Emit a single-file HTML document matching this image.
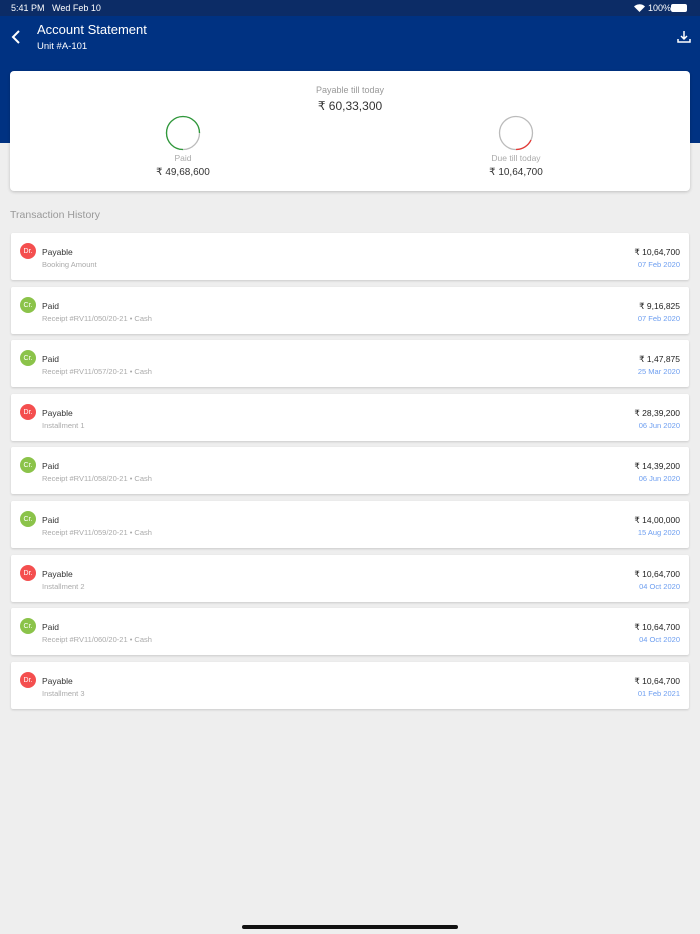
<!DOCTYPE html>
<html><head><meta charset="utf-8"><style>
*{margin:0;padding:0;box-sizing:border-box}
body{width:700px;height:934px;background:#eeeeee;font-family:"Liberation Sans",sans-serif;position:relative;overflow:hidden}
.sb{position:absolute;top:0;left:0;width:700px;height:16px;background:#0c2c66;color:#fff;font-size:9px}
.hd{position:absolute;top:16px;left:0;width:700px;height:127px;background:#003282}
.card{position:absolute;left:10px;top:71px;width:680px;height:120px;background:#fff;border-radius:4px;box-shadow:0 1px 3px rgba(0,0,0,.2)}
.t{position:absolute;white-space:nowrap}
.row{position:absolute;left:11px;width:678px;height:47px;background:#fff;border-radius:2px;box-shadow:0 1px 2px rgba(0,0,0,.15)}
.b{position:absolute;left:9px;top:10px;width:16px;height:16px;border-radius:50%;color:#fff;font-size:7px;display:flex;align-items:center;justify-content:center}
.dr{background:#f44f4f}.cr{background:#8bc34a}
.r1{position:absolute;left:31px;top:14px;font-size:8.5px;color:#333}
.r2{position:absolute;left:31px;top:27px;font-size:7.5px;color:#aaa}
.a{position:absolute;right:9px;top:14px;font-size:8.5px;color:#222}
.d{position:absolute;right:9px;top:27px;font-size:7.5px;color:#6d9ef0}
</style></head><body>
<div class="sb"><span class="t" style="left:11px;top:3px">5:41 PM&nbsp;&nbsp; Wed Feb 10</span><span class="t" style="left:648px;top:3px">100%</span>
<svg style="position:absolute;left:634px;top:4px" width="11" height="8" viewBox="0 0 11 8"><path d="M5.5 8L0 2.5A8 8 0 0 1 11 2.5Z" fill="#fff"/></svg>
<div style="position:absolute;left:671px;top:4px;width:16px;height:8px;background:#fff;border-radius:2px"></div></div>
<div class="hd">
<svg style="position:absolute;left:10px;top:13px" width="12" height="16"><path d="M9 2L3 8L9 14" stroke="#fff" stroke-width="2" fill="none"/></svg>
<div class="t" style="left:37px;top:6px;color:#fff;font-size:13px">Account Statement</div>
<div class="t" style="left:37px;top:25px;color:#fff;font-size:9.5px">Unit #A-101</div>
<svg style="position:absolute;left:677px;top:14px" width="14" height="14"><path d="M7 1V9M4 6L7 9L10 6M1 9V12H13V9" stroke="#fff" stroke-width="1.5" fill="none"/></svg>
</div>
<div class="card">
<div class="t" style="left:0;width:680px;text-align:center;top:14px;font-size:9px;color:#999">Payable till today</div>
<div class="t" style="left:0;width:680px;text-align:center;top:28px;font-size:12px;color:#333">₹ 60,33,300</div>
<svg style="position:absolute;left:155px;top:44px" width="36" height="36"><circle cx="18" cy="18" r="16.5" stroke="#bbb" stroke-width="1.3" fill="none"/><path d="M18 34.5A16.5 16.5 0 0 1 1.5 18A16.5 16.5 0 0 1 34.5 18" stroke="#2e9a3a" stroke-width="1.3" fill="none"/></svg>
<svg style="position:absolute;left:488px;top:44px" width="36" height="36"><circle cx="18" cy="18" r="16.5" stroke="#bbb" stroke-width="1.3" fill="none"/><path d="M33 25A16.5 16.5 0 0 1 18 34.5" stroke="#e53935" stroke-width="1.3" fill="none"/></svg>
<div class="t" style="left:123px;width:100px;text-align:center;top:82px;font-size:8.5px;color:#aaa">Paid</div>
<div class="t" style="left:123px;width:100px;text-align:center;top:96px;font-size:10px;color:#333">₹ 49,68,600</div>
<div class="t" style="left:456px;width:100px;text-align:center;top:82px;font-size:8.5px;color:#aaa">Due till today</div>
<div class="t" style="left:456px;width:100px;text-align:center;top:96px;font-size:10px;color:#333">₹ 10,64,700</div>
</div>
<div class="t" style="left:10px;top:209px;font-size:10.5px;color:#999">Transaction History</div>
<div class="row" style="top:233px"><div class="b dr">Dr.</div><div class="r1">Payable</div><div class="r2">Booking Amount</div><div class="a">₹ 10,64,700</div><div class="d">07 Feb 2020</div></div>
<div class="row" style="top:287px"><div class="b cr">Cr.</div><div class="r1">Paid</div><div class="r2">Receipt #RV11/050/20-21 • Cash</div><div class="a">₹ 9,16,825</div><div class="d">07 Feb 2020</div></div>
<div class="row" style="top:340px"><div class="b cr">Cr.</div><div class="r1">Paid</div><div class="r2">Receipt #RV11/057/20-21 • Cash</div><div class="a">₹ 1,47,875</div><div class="d">25 Mar 2020</div></div>
<div class="row" style="top:394px"><div class="b dr">Dr.</div><div class="r1">Payable</div><div class="r2">Installment 1</div><div class="a">₹ 28,39,200</div><div class="d">06 Jun 2020</div></div>
<div class="row" style="top:447px"><div class="b cr">Cr.</div><div class="r1">Paid</div><div class="r2">Receipt #RV11/058/20-21 • Cash</div><div class="a">₹ 14,39,200</div><div class="d">06 Jun 2020</div></div>
<div class="row" style="top:501px"><div class="b cr">Cr.</div><div class="r1">Paid</div><div class="r2">Receipt #RV11/059/20-21 • Cash</div><div class="a">₹ 14,00,000</div><div class="d">15 Aug 2020</div></div>
<div class="row" style="top:555px"><div class="b dr">Dr.</div><div class="r1">Payable</div><div class="r2">Installment 2</div><div class="a">₹ 10,64,700</div><div class="d">04 Oct 2020</div></div>
<div class="row" style="top:608px"><div class="b cr">Cr.</div><div class="r1">Paid</div><div class="r2">Receipt #RV11/060/20-21 • Cash</div><div class="a">₹ 10,64,700</div><div class="d">04 Oct 2020</div></div>
<div class="row" style="top:662px"><div class="b dr">Dr.</div><div class="r1">Payable</div><div class="r2">Installment 3</div><div class="a">₹ 10,64,700</div><div class="d">01 Feb 2021</div></div>
<div style="position:absolute;left:242px;top:925px;width:216px;height:4px;border-radius:2px;background:#111"></div>
</body></html>
